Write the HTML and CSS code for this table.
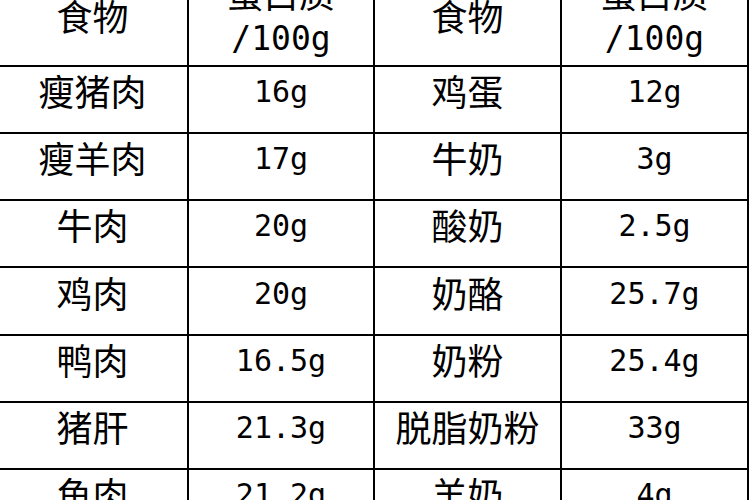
FILE: index.html
```html
<!DOCTYPE html>
<html lang="zh-CN">
<head>
<meta charset="utf-8">
<title>食物蛋白质含量</title>
<link rel="stylesheet" href="styles.css">
</head>
<body>
<div class="table">
  <div class="cell head name"><span class="zh">食物</span></div>
  <div class="cell head val"><span class="zh">蛋白质</span><span class="num">/100g</span></div>
  <div class="cell head name"><span class="zh">食物</span></div>
  <div class="cell head val"><span class="zh">蛋白质</span><span class="num">/100g</span></div>

  <div class="cell"><span class="zh">瘦猪肉</span></div>
  <div class="cell"><span class="num">16g</span></div>
  <div class="cell"><span class="zh">鸡蛋</span></div>
  <div class="cell"><span class="num">12g</span></div>

  <div class="cell"><span class="zh">瘦羊肉</span></div>
  <div class="cell"><span class="num">17g</span></div>
  <div class="cell"><span class="zh">牛奶</span></div>
  <div class="cell"><span class="num">3g</span></div>

  <div class="cell"><span class="zh">牛肉</span></div>
  <div class="cell"><span class="num">20g</span></div>
  <div class="cell"><span class="zh">酸奶</span></div>
  <div class="cell"><span class="num">2.5g</span></div>

  <div class="cell"><span class="zh">鸡肉</span></div>
  <div class="cell"><span class="num">20g</span></div>
  <div class="cell"><span class="zh">奶酪</span></div>
  <div class="cell"><span class="num">25.7g</span></div>

  <div class="cell"><span class="zh">鸭肉</span></div>
  <div class="cell"><span class="num">16.5g</span></div>
  <div class="cell"><span class="zh">奶粉</span></div>
  <div class="cell"><span class="num">25.4g</span></div>

  <div class="cell"><span class="zh">猪肝</span></div>
  <div class="cell"><span class="num">21.3g</span></div>
  <div class="cell"><span class="zh">脱脂奶粉</span></div>
  <div class="cell"><span class="num">33g</span></div>

  <div class="cell"><span class="zh">鱼肉</span></div>
  <div class="cell"><span class="num">21.2g</span></div>
  <div class="cell"><span class="zh">羊奶</span></div>
  <div class="cell"><span class="num">4g</span></div>
</div>
</body>
</html>
```
FILE: styles.css
```css
html, body {
  margin: 0;
  padding: 0;
  background: #fff;
  overflow: hidden;
  width: 750px;
  height: 500px;
}

.table {
  display: grid;
  grid-template-columns: 189px 184px 185px 185px;
  grid-template-rows: 65px;
  grid-auto-rows: 65.17px;
  gap: 2px;
  padding: 2px;
  margin-left: -4px;
  margin-top: -2px;
  width: max-content;
  background: #000;
  color: #000;
}

.cell {
  background: #fff;
  display: flex;
  align-items: center;
  justify-content: center;
  padding-bottom: 12px;
  box-sizing: border-box;
  line-height: 1;
}

.zh {
  font-family: "Noto Sans CJK SC", sans-serif;
  font-size: 36px;
  margin-bottom: 7px;
}

.num {
  font-family: "DejaVu Sans Mono", monospace;
  font-size: 30px;
  margin-bottom: 3px;
}

.head {
  flex-direction: column;
  justify-content: flex-end;
}

.head .zh,
.head .num {
  margin-bottom: 0;
}

.head.name {
  padding-bottom: 32px;
}

.head.val {
  padding-bottom: 10px;
}

.head.val .zh {
  margin-bottom: 12px;
}

.head .num {
  font-size: 33px;
}
```
